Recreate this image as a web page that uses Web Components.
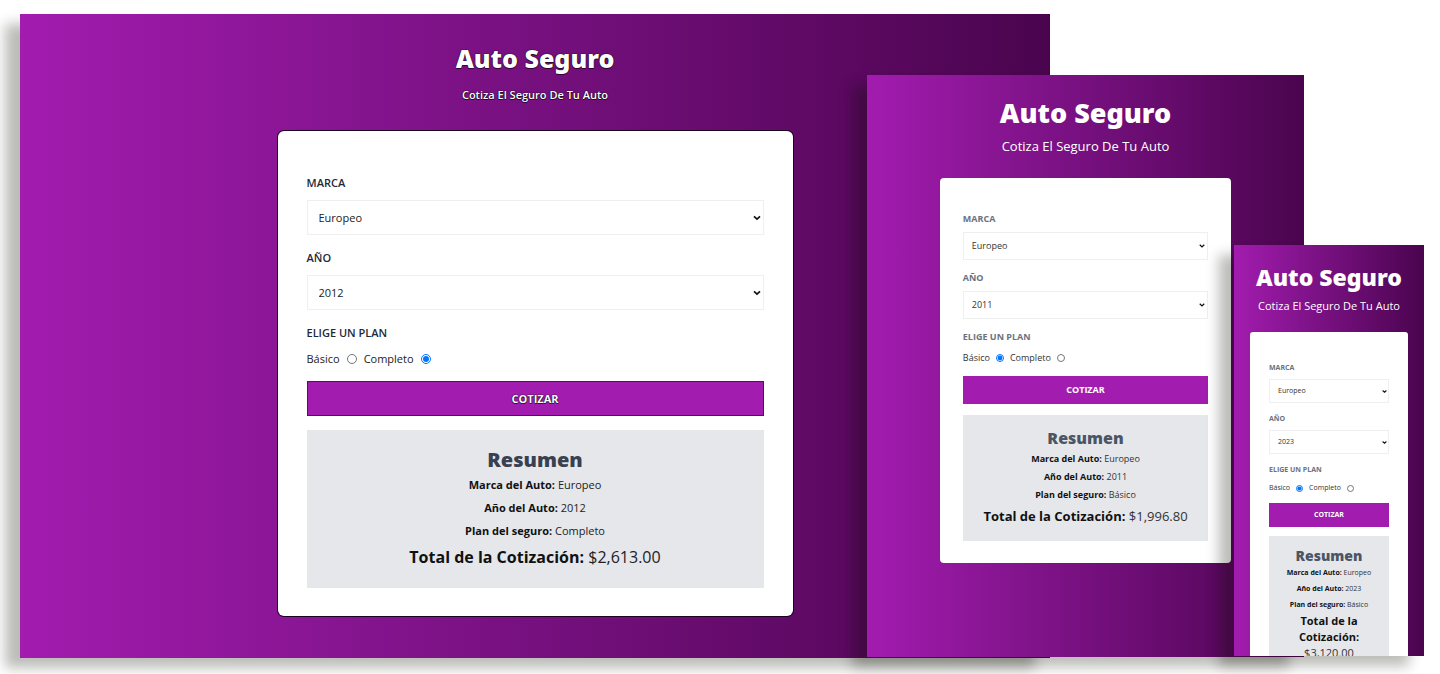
<!DOCTYPE html>
<html lang="es">
<head>
<meta charset="utf-8">
<meta name="viewport" content="width=device-width, initial-scale=1">
<title>Auto Seguro</title>
<style>
  body { margin: 0; background: #fff; font-family: "Open Sans", "Noto Sans", sans-serif; }
</style>
</head>
<body>
<device-showcase>
  <quote-screen slot="desktop" size="desktop" marca="Europeo" anio="2012" plan="Completo" total="$2,613.00"></quote-screen>
  <quote-screen slot="tablet" size="tablet" marca="Europeo" anio="2011" plan="Básico" total="$1,996.80"></quote-screen>
  <quote-screen slot="phone" size="phone" marca="Europeo" anio="2023" plan="Básico" total="$3,120.00"></quote-screen>
</device-showcase>

<template id="showcase-tpl">
  <style>
    :host { display: block; }
    /* Three overlapping previews share one row; columns scale with the window. */
    main {
      display: grid;
      box-sizing: border-box;
      min-height: 100vh;
      padding-bottom: 16px;
      overflow: hidden;
      grid-template-columns: 20fr 847fr 183fr 184fr 70fr 120fr 16fr;
      grid-template-rows: 1fr;
    }
    ::slotted(*) { grid-row: 1; min-width: 0; }
    ::slotted([slot="desktop"]) { grid-column: 2 / 4; margin-top: 14px; }
    ::slotted([slot="tablet"]) { grid-column: 3 / 6; margin-top: 75px; margin-bottom: 1px; }
    ::slotted([slot="phone"]) { grid-column: 5 / 7; margin-top: 245px; margin-bottom: 2px; }
  </style>
  <main>
    <slot name="desktop"></slot>
    <slot name="tablet"></slot>
    <slot name="phone"></slot>
  </main>
</template>

<template id="screen-tpl">
  <style>
    :host {
      display: block;
      position: relative;
      background: linear-gradient(to right, #a21caf, #4a044e);
      box-shadow: -15px 10px 12px rgba(14, 14, 0, .28);
      color: #111;
      --font: "Open Sans", "Noto Sans", sans-serif;
      font-family: var(--font);
    }
    :host([size="desktop"]) {
      --top: 27px; --title: 25px; --title-lh: 34px; --title-gap: 12px;
      --sub: 11px; --sub-lh: 16px; --sub-gap: 28px; --sub-weight: 600;
      --side: 25%; --radius: 6px; --pad-top: 44px; --pad: 29px; --pad-bottom: 28px;
      --text: 11px; --text-lh: 16px; --label-weight: 600; --label-color: #1f2937;
      --label-gap: 9px; --field: 35px; --field-pad: 11px; --gap: 15px;
      --radio: 10px; --radio-gap: 7px; --plan-gap: 10px; --button-gap: 14px;
      --box-pad: 16px; --head: 20px; --head-lh: 27px; --head-color: #374151; --row-lh: 23px; --total: 16px; --total-lh: 30px;
      --arrow: 8px; --arrow-gap: 3px; --value: #222;
      --edge: 0 0 0 1px #1a0420; --button-edge: #5b0b66;
      --text-edge: 0 0 1px #000, 0 0 1px #000, 0 1px 0 rgba(0, 0, 0, .5);
    }
    :host([size="tablet"]) {
      --top: 22px; --title: 27px; --title-lh: 32px; --title-gap: 7px;
      --sub: 13px; --sub-lh: 20px; --sub-gap: 22px; --sub-weight: 400;
      --side: calc(100% / 6); --radius: 4px; --pad-top: 34px; --pad: 23px; --pad-bottom: 22px;
      --text: 9px; --text-lh: 14px; --label-weight: 700; --label-color: #6b7280;
      --label-gap: 6px; --field: 28px; --field-pad: 8px; --gap: 11px;
      --radio: 8px; --radio-gap: 6px; --plan-gap: 7px; --button-gap: 11px;
      --box-pad: 12px; --head: 16px; --head-lh: 23px; --head-color: #4b5563; --row-lh: 18px; --total: 13px; --total-lh: 25px;
      --arrow: 6px; --arrow-gap: 3px; --value: #333;
      --edge: none; --button-edge: #a21caf; --text-edge: none;
    }
    :host([size="phone"]) {
      --top: 18px; --title: 23px; --title-lh: 28px; --title-gap: 6px;
      --sub: 11px; --sub-lh: 18px; --sub-gap: 17px; --sub-weight: 400;
      --side: 16px; --radius: 3px; --pad-top: 30px; --pad: 19px; --pad-bottom: 19px;
      --text: 7px; --text-lh: 12px; --label-weight: 700; --label-color: #6b7280;
      --label-gap: 5px; --field: 24px; --field-pad: 8px; --gap: 10px;
      --radio: 7px; --radio-gap: 6px; --plan-gap: 6px; --button-gap: 9px;
      --box-pad: 10px; --head: 14px; --head-lh: 19px; --head-color: #4b5563; --row-lh: 16px; --total: 11px; --total-lh: 16px;
      --arrow: 5px; --arrow-gap: 2px; --value: #333;
      --edge: none; --button-edge: #a21caf; --text-edge: none;
      /* the phone view is cut off at the bottom of its frame */
      height: 0; min-height: calc(100% - 247px); overflow: hidden;
    }
    header { padding-top: var(--top); text-align: center; color: #fff; text-shadow: var(--text-edge); }
    h1 { margin: 0 0 var(--title-gap); font-family: "Noto Sans", "Open Sans", sans-serif; font-size: var(--title); line-height: var(--title-lh); font-weight: 900; white-space: nowrap; }
    header p { margin: 0 0 var(--sub-gap); font-size: var(--sub); line-height: var(--sub-lh); font-weight: var(--sub-weight); white-space: nowrap; }
    section {
      margin: 0 var(--side);
      padding: var(--pad-top) var(--pad) var(--pad-bottom);
      background: #fff;
      border-radius: var(--radius);
      box-shadow: var(--edge);
    }
    quote-field { margin-bottom: var(--gap); }
    fieldset { margin: 0; padding: 0; border: 0; min-width: 0; }
    legend { padding: 0; margin-bottom: var(--plan-gap); font-size: var(--text); line-height: var(--text-lh); font-weight: var(--label-weight); color: var(--label-color); }
    .plans { display: flex; align-items: center; gap: var(--radio-gap); font-size: var(--text); line-height: var(--text-lh); color: var(--value); }
    input { width: var(--radio); height: var(--radio); margin: 0; accent-color: #0075ff; }
    button {
      display: block; width: 100%; height: var(--field);
      margin: var(--button-gap) 0; padding: 0;
      border: 1px solid var(--button-edge); background: #a21caf; color: #fff;
      font: 700 var(--text)/var(--text-lh) var(--font);
      text-shadow: var(--text-edge);
    }
  </style>
  <header>
    <h1>Auto Seguro</h1>
    <p>Cotiza El Seguro De Tu Auto</p>
  </header>
  <section>
    <form>
      <quote-field class="marca" label="MARCA"></quote-field>
      <quote-field class="anio" label="AÑO"></quote-field>
      <fieldset>
        <legend>ELIGE UN PLAN</legend>
        <div class="plans">
          <label for="basico">Básico</label><input type="radio" id="basico" name="plan" value="Básico">
          <label for="completo">Completo</label><input type="radio" id="completo" name="plan" value="Completo">
        </div>
      </fieldset>
      <button type="button">COTIZAR</button>
    </form>
    <quote-summary></quote-summary>
  </section>
</template>

<template id="field-tpl">
  <style>
    :host { display: block; }
    label { display: block; margin-bottom: var(--label-gap); font-size: var(--text); line-height: var(--text-lh); font-weight: var(--label-weight); color: var(--label-color); }
    div { display: grid; align-items: center; }
    select, svg { grid-area: 1 / 1; }
    select {
      appearance: none; box-sizing: border-box; width: 100%; height: var(--field);
      margin: 0; padding: 0 var(--field-pad);
      border: 1px solid #efeff1; border-radius: 0; background: #fff; color: var(--value);
      font: 400 var(--text)/var(--text-lh) var(--font);
    }
    svg { justify-self: end; width: var(--arrow); height: var(--arrow); margin-right: var(--arrow-gap); pointer-events: none; }
  </style>
  <label for="control"></label>
  <div>
    <select id="control"></select>
    <svg viewBox="0 0 8 8" aria-hidden="true"><path d="M1 2.4 4 5.2 7 2.4" fill="none" stroke="#111" stroke-width="1.7"/></svg>
  </div>
</template>

<template id="summary-tpl">
  <style>
    :host { display: block; padding: var(--box-pad); background: #e5e7eb; text-align: center; }
    h2 { margin: 0; font-family: "Noto Sans", "Open Sans", sans-serif; font-size: var(--head); line-height: var(--head-lh); font-weight: 900; color: var(--head-color); }
    p { margin: 0; font-size: var(--text); line-height: var(--row-lh); color: var(--value); }
    p.total { font-size: var(--total); line-height: var(--total-lh); }
    b { font-weight: 700; color: #111; }
  </style>
  <h2>Resumen</h2>
  <p><b>Marca del Auto:</b> <span class="marca"></span></p>
  <p><b>Año del Auto:</b> <span class="anio"></span></p>
  <p><b>Plan del seguro:</b> <span class="plan"></span></p>
  <p class="total"><b>Total de la Cotización:</b> <span class="sum"></span></p>
</template>

<script>
  class TemplateElement extends HTMLElement {
    constructor() {
      super();
      const tpl = document.getElementById(this.constructor.template);
      this.attachShadow({ mode: "open" }).append(document.importNode(tpl.content, true));
    }
    $(selector) { return this.shadowRoot.querySelector(selector); }
  }

  class QuoteField extends TemplateElement {
    static template = "field-tpl";
    connectedCallback() { this.$("label").textContent = this.getAttribute("label"); }
    fill(options, value) {
      this.$("select").replaceChildren(...options.map(o => new Option(o, o, o === value, o === value)));
    }
  }

  class QuoteSummary extends TemplateElement {
    static template = "summary-tpl";
    show(values) {
      for (const [name, value] of Object.entries(values)) this.$("." + name).textContent = value;
    }
  }

  class QuoteScreen extends TemplateElement {
    static template = "screen-tpl";
    connectedCallback() {
      const get = name => this.getAttribute(name);
      const years = Array.from({ length: 20 }, (_, i) => String(2023 - i));
      this.$("quote-field.marca").fill(["Americano", "Europeo", "Asiático"], get("marca"));
      this.$("quote-field.anio").fill(years, get("anio"));
      this.$(get("plan") === "Completo" ? "#completo" : "#basico").checked = true;
      this.$("quote-summary").show({ marca: get("marca"), anio: get("anio"), plan: get("plan"), sum: get("total") });
    }
  }

  class DeviceShowcase extends TemplateElement {
    static template = "showcase-tpl";
  }

  customElements.define("quote-field", QuoteField);
  customElements.define("quote-summary", QuoteSummary);
  customElements.define("quote-screen", QuoteScreen);
  customElements.define("device-showcase", DeviceShowcase);
</script>
</body>
</html>
